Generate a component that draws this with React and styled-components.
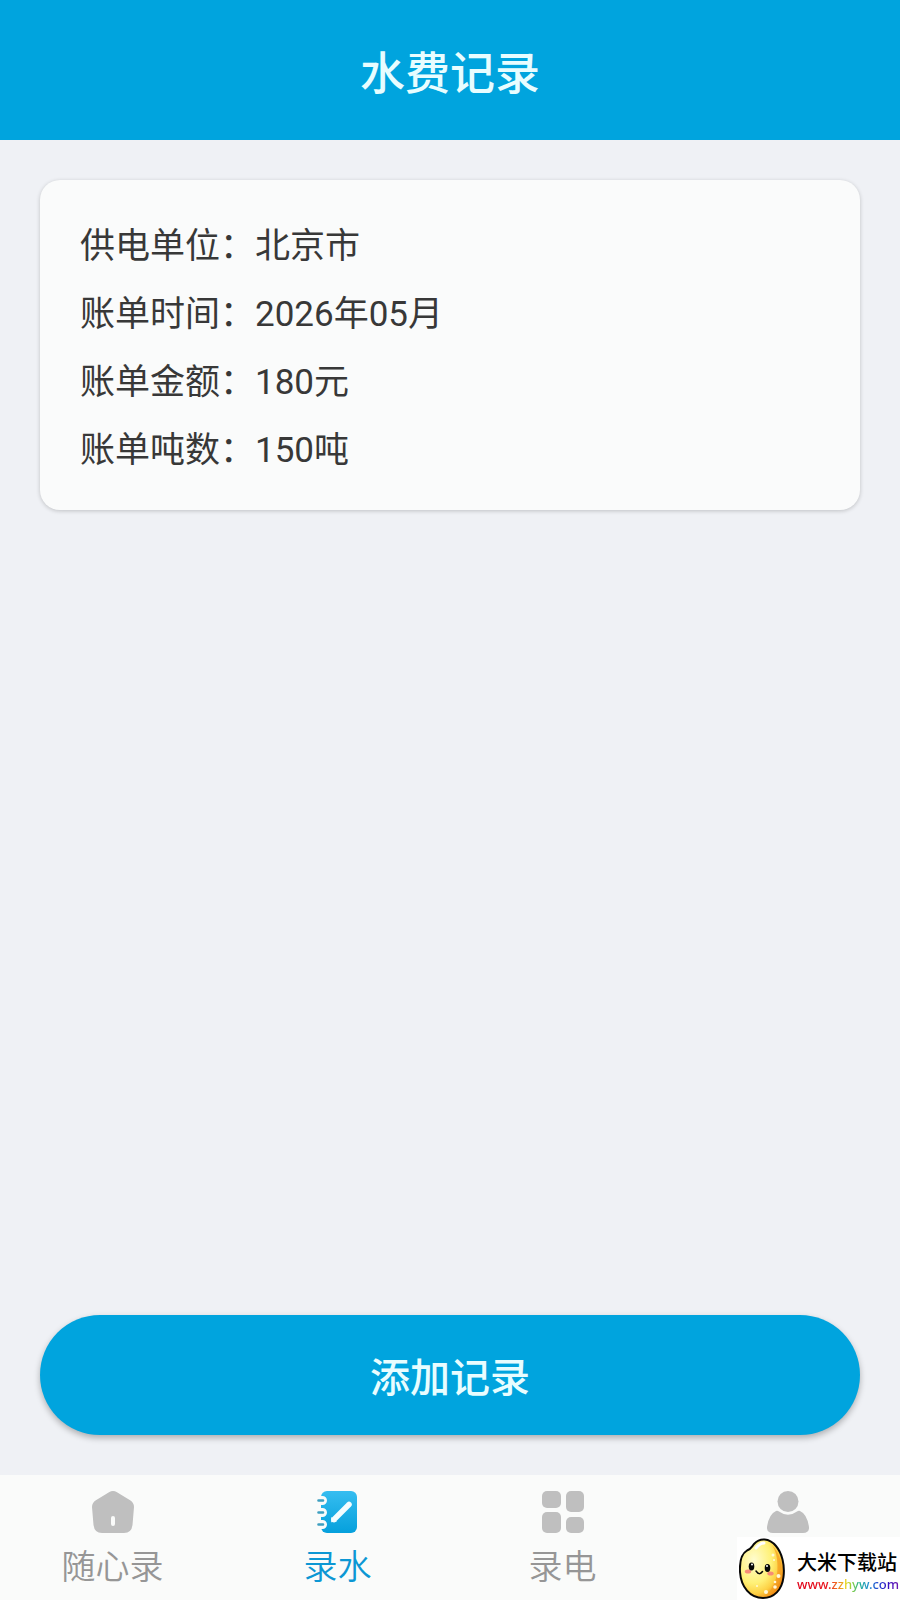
import React from "react";
import styled, { createGlobalStyle } from "styled-components";

const GlobalStyle = createGlobalStyle`
  *, *::before, *::after { box-sizing: border-box; }
  body {
    margin: 0;
    background: #eff1f5;
    font-family: Roboto, "Noto Sans CJK SC", sans-serif;
  }
`;

const Screen = styled.div`
  display: flex;
  flex-direction: column;
  min-height: 100vh;
`;

const Header = styled.header`
  display: flex;
  align-items: center;
  justify-content: center;
  height: 140px;
  padding-top: 10px;
  background: #00a4de;
`;

const Title = styled.h1`
  margin: 0;
  color: #e8fdff;
  font-size: 45px;
  font-weight: 500;
  line-height: 60px;
`;

const Content = styled.main`
  flex: 1;
  display: flex;
  flex-direction: column;
  justify-content: space-between;
  gap: 40px;
  padding: 40px;
`;

const RecordCard = styled.dl`
  margin: 0;
  padding: 33px 40px 25px;
  border-radius: 20px;
  background: #fafbfb;
  box-shadow: 0 1px 4px rgba(0, 0, 0, 0.2);
`;

const RecordRow = styled.div`
  display: flex;
  color: #383838;
  font-size: 35px;
  font-weight: 400;
  line-height: 68px;
`;

const RecordLabel = styled.dt`
  flex: none;
`;

const RecordValue = styled.dd`
  margin: 0;
`;

const AddButton = styled.button`
  height: 120px;
  padding: 0 40px;
  border: 0;
  border-radius: 60px;
  background: #00a4de;
  box-shadow: 0 3px 6px rgba(0, 0, 0, 0.28);
  color: #e8fdff;
  font-family: inherit;
  font-size: 40px;
  font-weight: 500;
  cursor: pointer;
`;

const TabBar = styled.nav`
  position: sticky;
  bottom: 0;
  display: grid;
  grid-template-columns: repeat(4, 1fr);
  height: 125px;
  background: #fafbfa;
`;

const Tab = styled.a`
  display: flex;
  flex-direction: column;
  align-items: center;
  gap: 12px;
  padding-top: 16px;
  color: ${({ $active }) => ($active ? "#0c97d4" : "#969696")};
  font-size: 34px;
  font-weight: 350;
  line-height: 44px;
  text-decoration: none;
`;

const TabIcon = styled.svg`
  display: block;
  width: 42px;
  height: 42px;
  fill: #bfbfbf;
`;

const SiteBadge = styled.a`
  position: absolute;
  right: 0;
  bottom: 0;
  display: flex;
  align-items: center;
  gap: 12px;
  width: 163px;
  height: 63px;
  padding-left: 2px;
  background: #fff;
  text-decoration: none;
`;

const RiceIcon = styled.svg`
  flex: none;
  width: 46px;
  height: 61px;
`;

const BadgeText = styled.span`
  display: flex;
  flex-direction: column;
  padding-top: 8px;
  white-space: nowrap;
`;

const BadgeName = styled.span`
  color: #000;
  font-size: 20px;
  font-weight: 500;
  line-height: 24px;
`;

const BadgeUrl = styled.span`
  background: linear-gradient(90deg, #e00018 0%, #e8141c 30%, #f08020 41%, #e8d820 48%, #8ed040 54%, #20b090 61%, #2090d0 70%, #2040d0 80%, #3a10c0 90%, #7018b0 100%);
  background-clip: text;
  color: transparent;
  font-family: "Noto Sans", sans-serif;
  font-size: 13px;
  font-weight: 500;
  line-height: 19px;
`;

const HomeIcon = () => (
  <TabIcon viewBox="0 0 42 42" aria-hidden="true">
    <path
      fillRule="evenodd"
      d="M17 1.200Q21 -1 25 1.200L38.500 9.500Q42 12 42 16L40.500 34Q39.500 42 32 42H10Q2.500 42 1.500 34L0 16Q0 12 3.500 9.500ZM19 27V33Q19 35 21 35Q23 35 23 33V27Q23 25 21 25Q19 25 19 27Z"
    />
  </TabIcon>
);

const NotebookIcon = () => (
  <TabIcon viewBox="0 0 42 42" aria-hidden="true">
    <defs>
      <linearGradient id="notebook" x1="0" y1="0" x2="0" y2="1">
        <stop offset="0" stopColor="#36bdf0" />
        <stop offset="1" stopColor="#05a0dc" />
      </linearGradient>
    </defs>
    <rect x="4" width="36" height="42" rx="6" fill="url(#notebook)" />
    <g fill="none" strokeLinecap="round">
      <path d="M3 9.500H5.500M3 21.500H5.500M3 33.500H5.500" stroke="#fafbfa" strokeWidth="9" />
      <path d="M1.500 9.500H6M1.500 21.500H6M1.500 33.500H6" stroke="#3d9fc0" strokeWidth="2.600" />
      <path d="M17 28.500L32 13.500" stroke="#f4fdff" strokeWidth="5.500" />
    </g>
    <path d="M14.300 26L14.200 31.300L20 30.500Z" fill="#f4fdff" />
  </TabIcon>
);

const GridIcon = () => (
  <TabIcon viewBox="0 0 42 42" aria-hidden="true">
    <rect width="19" height="17" rx="5" />
    <rect x="24" width="18" height="21" rx="5" />
    <rect y="21" width="19" height="21" rx="5" />
    <rect x="24" y="26" width="18" height="16" rx="5" />
  </TabIcon>
);

const PersonIcon = () => (
  <TabIcon viewBox="0 0 42 42" aria-hidden="true">
    <circle cx="21" cy="10.500" r="10.500" />
    <path d="M9 20Q10.500 19.500 12 20.500Q21 27 30 20.500Q31.500 19.500 33 20Q40 23 42 36Q42.500 42 36 42H6Q-0.500 42 0 36Q2 23 9 20Z" />
  </TabIcon>
);

const Rice = () => (
  <RiceIcon viewBox="0 0 46 61" aria-hidden="true">
    <defs>
      <radialGradient id="rice" cx="0.320" cy="0.350" r="0.720">
        <stop offset="0" stopColor="#fffccf" />
        <stop offset="0.550" stopColor="#fff177" />
        <stop offset="0.800" stopColor="#fdd044" />
        <stop offset="1" stopColor="#f08c14" />
      </radialGradient>
    </defs>
    <path
      d="M15 6C21 -0.500 30 0 37 8C43 15 46 27 44.500 39C43 52 35 60 24 60C11 60 2 49 1 34C0.500 24 2 16 8 12.500C12 11 12.500 9 15 6Z"
      fill="url(#rice)"
      stroke="#080808"
      strokeWidth="2"
    />
    <path d="M33 7Q45 20 42 39Q39 53 27 57Q39 46 38.500 27Q38 14 33 7Z" fill="#f39a1e" opacity="0.700" />
    <path d="M17 10Q21 5 25 5" stroke="#fff" strokeWidth="3" strokeLinecap="round" fill="none" />
    <ellipse cx="9" cy="33.500" rx="3.200" ry="2" fill="#f68c78" />
    <ellipse cx="31.500" cy="35.500" rx="3.200" ry="2" fill="#f68c78" />
    <ellipse cx="12.500" cy="28.500" rx="2.800" ry="4" fill="#080808" />
    <ellipse cx="28.500" cy="30" rx="2.800" ry="4" fill="#080808" />
    <circle cx="13" cy="26.500" r="1" fill="#fff" />
    <circle cx="28" cy="28" r="1" fill="#fff" />
    <path d="M17 33Q20.500 38 23.500 33.500" stroke="#080808" strokeWidth="1.500" strokeLinecap="round" fill="none" />
    <g fill="#fff8d8">
      <circle cx="34" cy="17" r="1.500" />
      <circle cx="35" cy="22" r="1" />
      <circle cx="39.500" cy="38" r="2" />
      <circle cx="36" cy="44" r="1.300" />
      <circle cx="36" cy="49" r="1.800" />
      <circle cx="27" cy="54" r="2" />
      <circle cx="18" cy="48" r="1" />
    </g>
  </RiceIcon>
);

const records = [
  ["供电单位：", "北京市"],
  ["账单时间：", "2026年05月"],
  ["账单金额：", "180元"],
  ["账单吨数：", "150吨"],
];

const tabs = [
  { label: "随心录", Icon: HomeIcon },
  { label: "录水", Icon: NotebookIcon, active: true },
  { label: "录电", Icon: GridIcon },
  { label: "", name: "我的", Icon: PersonIcon },
];

export default function App() {
  return (
    <Screen lang="zh-CN">
      <GlobalStyle />
      <Header>
        <Title>水费记录</Title>
      </Header>
      <Content>
        <RecordCard>
          {records.map(([label, value]) => (
            <RecordRow key={label}>
              <RecordLabel>{label}</RecordLabel>
              <RecordValue>{value}</RecordValue>
            </RecordRow>
          ))}
        </RecordCard>
        <AddButton type="button">添加记录</AddButton>
      </Content>
      <TabBar>
        {tabs.map(({ label, name, Icon, active }) => (
          <Tab
            key={label || name}
            href="#"
            $active={active}
            aria-label={name}
            aria-current={active ? "page" : undefined}
          >
            <Icon />
            {label}
          </Tab>
        ))}
        <SiteBadge href="#">
          <Rice />
          <BadgeText>
            <BadgeName>大米下载站</BadgeName>
            <BadgeUrl>www.zzhyw.com</BadgeUrl>
          </BadgeText>
        </SiteBadge>
      </TabBar>
    </Screen>
  );
}
